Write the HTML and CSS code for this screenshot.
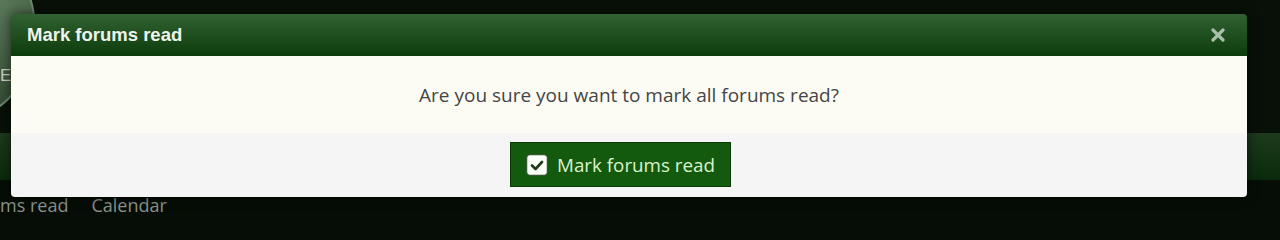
FILE: index.html
```html
<!DOCTYPE html>
<html>
<head>
<meta charset="utf-8">
<link rel="stylesheet" href="styles.css">
</head>
<body>
<div class="page">
  <div class="bg-header">
    <div class="avatar"></div>
    <span class="avatar-text">E</span>
  </div>
  <div class="navbar"></div>
  <div class="links">
    <span class="link">ms read</span>
    <span class="link">Calendar</span>
  </div>

  <div class="dialog">
    <div class="dialog-header">
      <span class="dialog-title">Mark forums read</span>
      <span class="dialog-close">
        <svg width="14" height="14" viewBox="0 0 14 14"><path d="M2 2 L12 12 M12 2 L2 12" stroke="#a9bfa9" stroke-width="3.2" stroke-linecap="round"/></svg>
      </span>
    </div>
    <div class="dialog-body">Are you sure you want to mark all forums read?</div>
    <div class="dialog-footer">
      <button class="btn">
        <svg class="btn-icon" width="22" height="22" viewBox="0 0 22 22"><rect x="0.75" y="0.75" width="20.5" height="20.5" rx="3" fill="#fbfff8" stroke="#2c4a28" stroke-width="1"/><path d="M6 11.5 L9.5 15 L16 8" fill="none" stroke="#1d3a1a" stroke-width="2.6" stroke-linecap="round" stroke-linejoin="round"/></svg>
        <span>Mark forums read</span>
      </button>
    </div>
  </div>
</div>
</body>
</html>
```

FILE: styles.css
```css
html, body {
  margin: 0;
  padding: 0;
  background: #060d06;
  overflow: hidden;
}
.page {
  position: relative;
  width: 1280px;
  height: 223px;
  overflow: hidden;
  font-family: "Open Sans", "Noto Sans", sans-serif;
}
.bg-header {
  height: 133px;
  position: relative;
  overflow: hidden;
  background: #081008;
}
.avatar {
  position: absolute;
  left: -112px;
  top: -60px;
  width: 144px;
  height: 176px;
  border-radius: 50%;
  background: radial-gradient(circle at 70% 30%, #5d7d5d, #3a523a 60%, #2a3a2a);
  border: 2px solid #6f8a6f;
}
.avatar-text {
  position: absolute;
  left: 0;
  top: 66px;
  font-size: 17px;
  color: #c9d2c9;
  font-family: "Liberation Sans", sans-serif;
}
.navbar {
  height: 47px;
  background: linear-gradient(#1d3a1d, #0b2a0b);
}
.links {
  display: flex;
  gap: 23px;
  padding-top: 13px;
  font-size: 18px;
  color: #8b928b;
  line-height: 24px;
}
.dialog {
  position: absolute;
  left: 11px;
  top: 14px;
  width: 1236px;
  border-radius: 4px;
  overflow: hidden;
  box-shadow: 0 0 12px rgba(0,0,0,0.6);
}
.dialog-header {
  height: 42px;
  background: linear-gradient(#326232, #0c3b0c);
  display: flex;
  align-items: center;
  justify-content: space-between;
  padding: 0 22px 0 16px;
}
.dialog-title {
  font-family: "Liberation Sans", Arial, sans-serif;
  font-weight: bold;
  font-size: 18.5px;
  color: #eef4ec;
}
.dialog-close {
  display: flex;
}
.dialog-body {
  height: 77px;
  background: #fcfcf4;
  display: flex;
  align-items: center;
  justify-content: center;
  font-size: 19px;
  color: #454545;
}
.dialog-footer {
  height: 64px;
  background: #f4f5f4;
  display: flex;
  justify-content: center;
  align-items: flex-start;
  padding-top: 9px;
  box-sizing: border-box;
}
.btn {
  width: 221px;
  height: 45px;
  margin-right: 17px;
  background: #135a0e;
  border: 1px solid #0c3a08;
  color: #dcf2cc;
  font-family: "Open Sans", "Noto Sans", sans-serif;
  font-size: 18.8px;
  display: flex;
  align-items: center;
  justify-content: center;
  gap: 9px;
  padding: 0;
  cursor: pointer;
}
.btn-icon {
  display: block;
}
```
